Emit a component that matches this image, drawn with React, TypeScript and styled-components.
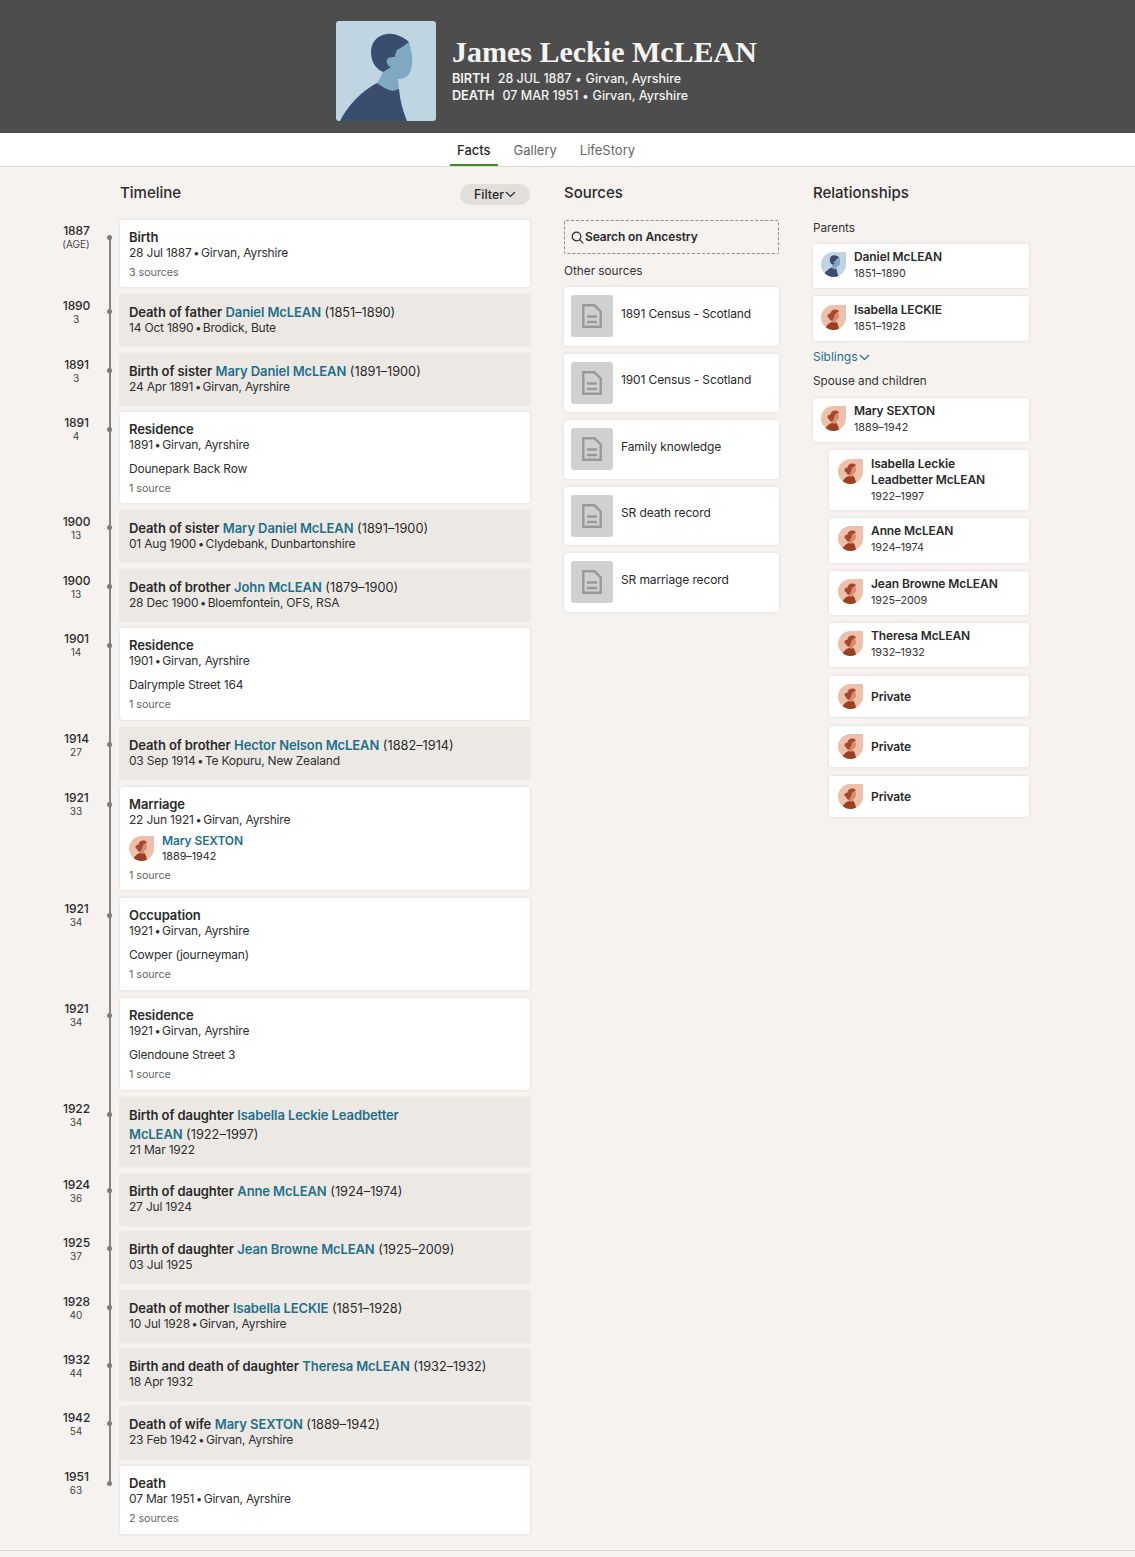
import React from "react";
import styled, { createGlobalStyle } from "styled-components";

const Global = createGlobalStyle`
  html, body { margin: 0; padding: 0; background: #f5f2ef; }
  body { font-family: Inter, "Liberation Sans", sans-serif; color: #2a2a2a; font-size: 12px; line-height: 16px; }
`;

const Page = styled.div`width: 1135px; height: 1557px; overflow: hidden; background: #f5f2ef;`;
const Header = styled.header`height: 133px; background: #4d4d4d; display: flex; padding: 21px 0 0 336px; box-sizing: border-box; gap: 16px;`;
const Portrait = styled.div`width: 100px; height: 100px; border-radius: 3px; overflow: hidden; background: #c0d5e2; svg { display: block; }`;
const HeadInfo = styled.div`color: #f2f2f2; padding-top: 13px;`;
const Name = styled.h1`margin: 0; font: bold 30px/36px "Liberation Serif", serif; color: #f4f4f4; white-space: nowrap;`;
const Bullet = styled.span`font-size: 11px; margin: 0 -1.5px;`;
const HeadLine = styled.div`
  font-size: 12.5px; line-height: 17px; font-weight: 500; white-space: nowrap;
  b { font-size: 12.75px; font-weight: 600; letter-spacing: -0.1px; margin-right: 8px; }
  ${Bullet} { font-size: 12px; margin: 0 0.5px; }
`;
const Tabs = styled.nav`height: 34px; box-sizing: border-box; background: #fff; border-bottom: 1px solid #dcd9d5; display: flex; padding-left: 450px; gap: 9px;`;
const Tab = styled.a<{ $active?: boolean }>`
  height: 33px; box-sizing: border-box; padding: 9px 7px 0; font-size: 13px; color: ${p => (p.$active ? "#2a2a2a" : "#666")};
  font-weight: ${p => (p.$active ? 500 : 400)}; border-bottom: 2px solid ${p => (p.$active ? "#3f8a1c" : "transparent")};
`;
const Main = styled.main`display: flex; height: 1384px; box-sizing: border-box; border-bottom: 1px solid #dcd9d5; padding: 16px 0 0 60px;`;
const TimelineCol = styled.section`width: 472px; margin-right: 32px;`;
const ColHead = styled.div<{ $indent?: number }>`height: 37px; display: flex; justify-content: space-between; align-items: flex-start; margin-left: ${p => p.$indent ?? 0}px;`;
const Title = styled.h2`margin: 0; font-size: 15px; line-height: 20px; font-weight: 500; color: #2a2a2a;`;
const FilterBtn = styled.button`
  width: 70px; height: 21px; margin: 1px 2px 0 0; border: 0; padding: 0; border-radius: 11px; background: #e2dfdb; color: #2a2a2a;
  font: 500 12.5px Inter, sans-serif; display: flex; justify-content: center; align-items: center; gap: 1px;
`;
const Rows = styled.div`
  position: relative;
  &::before { content: ""; position: absolute; left: 49px; top: 17px; bottom: 50px; width: 1.5px; background: #858585; }
`;
const Row = styled.div<{ $h: number; $gap: number }>`display: flex; height: ${p => p.$h}px; margin-bottom: ${p => p.$gap}px;`;
const YearBox = styled.div<{ $grey?: boolean }>`width: 32px; text-align: center; padding-top: ${p => (p.$grey ? 4 : 3)}px; flex: none;`;
const Year = styled.div`font-size: 12px; letter-spacing: -0.1px; margin-left: 1px; line-height: 15px; font-weight: 500; color: #2a2a2a;`;
const Age = styled.div`font-size: 10px; line-height: 13px; color: #444;`;
const Rail = styled.div`width: 28px; flex: none; position: relative; &::after { content: ""; position: absolute; left: 15px; top: 15px; width: 5px; height: 5px; border-radius: 50%; background: #7c7c7c; }`;
const Card = styled.div<{ $grey?: boolean }>`
  box-sizing: border-box; border-radius: 3px; flex: none; padding: 9px 9px 0;
  width: ${p => (p.$grey ? 412 : 410)}px;
  margin-left: ${p => (p.$grey ? -1 : 0)}px;
  padding-left: ${p => (p.$grey ? 10 : 9)}px;
  background: ${p => (p.$grey ? "#ece9e5" : "#fff")};
  box-shadow: ${p => (p.$grey ? "0 0 2px rgba(0,0,0,.05)" : "0 0 3px rgba(0,0,0,.12)")};
`;
const EvTitle = styled.div<{ $grey?: boolean }>`
  font-size: 12.75px; line-height: ${p => (p.$grey ? 18 : 16)}px; color: #2a2a2a;
  b { font-size: 13px; font-weight: 600; letter-spacing: -0.1px; }
  a { font-size: 13px; color: #1f6f8b; font-weight: 600; letter-spacing: -0.1px; }
`;
const EvLine = styled.div<{ $grey?: boolean }>`font-size: 12px; letter-spacing: -0.2px; line-height: 16px; color: #2f2f2f; margin-top: ${p => (p.$grey ? -2 : -1)}px;`;
const EvDesc = styled(EvLine)`margin-top: 8px;`;
const EvSrc = styled.div`font-size: 10.75px; letter-spacing: -0.05px; line-height: 15px; margin-top: 3.5px; color: #666;`;
const Spouse = styled.div`display: flex; gap: 8px; margin-top: 5px; height: 31px; align-items: center;`;
const SpouseName = styled.div`font-size: 12px; letter-spacing: -0.1px; line-height: 16px; color: #1f6f8b; font-weight: 600;`;
const SpouseYears = styled.div`font-size: 10.75px; line-height: 16px;`;
const Avatar = styled.div<{ $male?: boolean; $mt?: number }>`width: 25px; height: 25px; flex: none; margin-top: ${p => p.$mt ?? 0}px; border-radius: 50% 0 50% 50%; overflow: hidden; background: ${p => (p.$male ? "#c0d5e2" : "#ecc0ab")}; svg { display: block; }`;
const SourcesCol = styled.section`width: 215px; margin-right: 34px;`;
const SearchBox = styled.div`height: 34px; box-sizing: border-box; border: 1px dashed #8c8c8c; border-radius: 2px; display: flex; align-items: center; gap: 1px; padding-left: 6px; font-size: 12px; font-weight: 600; letter-spacing: -0.1px;`;
const Label = styled.div<{ $mt?: number; $mb?: number }>`font-size: 11.75px; line-height: 16px; color: #333; margin-top: ${p => p.$mt ?? 0}px; margin-bottom: ${p => p.$mb ?? 0}px;`;
const SourceList = styled.div`display: flex; flex-direction: column; gap: 8px; margin-top: 8px;`;
const SourceCard = styled.div`height: 58.5px; box-sizing: border-box; background: #fff; border-radius: 3px; box-shadow: 0 0 3px rgba(0,0,0,.12); display: flex; align-items: center; padding-left: 7px; gap: 8px;`;
const SourceText = styled.span`font-size: 12px; letter-spacing: -0.12px; margin-bottom: 5px;`;
const Thumb = styled.div`width: 42px; height: 42px; border-radius: 3px; background: #d0d0d0; display: flex; align-items: center; justify-content: center;`;
const RelCol = styled.section`width: 216px;`;
const RelCard = styled.div<{ $h: number; $child?: boolean; $gap?: number; $center?: boolean; $pt?: number }>`
  height: ${p => p.$h}px; box-sizing: border-box; background: #fff; border-radius: 3px; box-shadow: 0 0 3px rgba(0,0,0,.12);
  margin-left: ${p => (p.$child ? 16 : 0)}px; margin-bottom: ${p => p.$gap ?? 8}px; display: flex; align-items: ${p => (p.$center ? "center" : "flex-start")}; gap: 8px;
  padding: ${p => (p.$center ? 0 : p.$pt ?? 5)}px 0 0 ${p => (p.$child ? 9 : 8)}px;
`;
const RelName = styled.div`font-size: 12px; letter-spacing: -0.1px; line-height: 16px; font-weight: 600; color: #2a2a2a;`;
const RelYears = styled.div`font-size: 10.75px; line-height: 16px; margin-top: 0.5px; color: #333;`;
const Siblings = styled.a`display: flex; align-items: center; gap: 1px; color: #1f6f8b; font-size: 12px; line-height: 16px; margin: 8px 0 8px;`;

const Person = ({ male, size = 25 }: { male?: boolean; size?: number }) =>
  male ? (
    <svg width={size} height={size} viewBox="0 0 100 100">
      <path d="M73 21 C75 28 77 36 76 44 C75 52 72 58 62 58 L63 70 L54 72 L41 62 C44 58 46 54 47 50 L50 30 Z" fill="#7fa9c2" />
      <path d="M73 21 C66 15 58 12 51 13 C41 14 35 22 35 31 C35 41 40 48 47 51 L55 46 C52 45 50 42 51 39 C52 36 56 36 59 36 C59 33 60 31 61 29 C65 27 69 24 73 21 Z" fill="#3a4d6e" />
      <path d="M4 100 C12 84 26 70 41 62 C46 66 52 69 57 70 L63 68 C64 80 67 90 71 100 Z" fill="#3a4d6e" />
    </svg>
  ) : (
    <svg width={size} height={size} viewBox="0 0 100 100">
      <path d="M50 26 C60 20 72 28 72 42 C72 52 66 58 60 60 L61 72 L44 72 L44 50 Z" fill="#d98c74" />
      <path d="M38 34 C38 24 48 16 60 18 C66 19 70 22 72 27 C62 28 56 34 54 42 C52 50 48 58 44 64 C38 62 34 58 32 52 C25 50 23 38 32 36 C34 35 36 35 38 34 Z" fill="#a8482a" />
      <path d="M15 100 C18 84 30 72 44 68 C50 72 56 72 62 68 C68 76 72 88 72 100 Z" fill="#98401f" />
    </svg>
  );

const Chevron = ({ color = "#2a2a2a" }: { color?: string }) => (
  <svg width="11" height="7" viewBox="0 0 11 7" fill="none" stroke={color} strokeWidth="1.2"><path d="M1 1l4.5 4.5L10 1" /></svg>
);

const DocIcon = () => (
  <svg width="20" height="24" viewBox="0 0 20 24" fill="none" stroke="#999" strokeWidth="2.4">
    <path d="M1.3 1.3h11.2l6.2 6.2v15.2H1.3z" />
    <path d="M5 12.5h10M5 18h10" strokeWidth="2.4" />
  </svg>
);

const SearchIcon = () => (
  <svg width="13" height="13" viewBox="0 0 13 13" fill="none" stroke="#2a2a2a" strokeWidth="1.2"><circle cx="5.5" cy="5.5" r="4.3" /><path d="M8.6 8.6L12.3 12.3" /></svg>
);

type Ev = {
  y: string; a: string; h: number; g: number; grey?: boolean;
  t: React.ReactNode; d: string; desc?: string; src?: string; spouse?: boolean;
};

const L = ({ children }: { children: React.ReactNode }) => <a>{children}</a>;

const Dated = ({ text }: { text: string }) => {
  const [a, b] = text.split(" • ");
  return b ? <>{a} <Bullet>•</Bullet> {b}</> : <>{a}</>;
};

const events: Ev[] = [
  { y: "1887", a: "(AGE)", h: 67, g: 7, t: <b>Birth</b>, d: "28 Jul 1887 • Girvan, Ayrshire", src: "3 sources" },
  { y: "1890", a: "3", h: 53, g: 6, grey: true, t: <><b>Death of father</b> <L>Daniel McLEAN</L> (1851–1890)</>, d: "14 Oct 1890 • Brodick, Bute" },
  { y: "1891", a: "3", h: 53, g: 6, grey: true, t: <><b>Birth of sister</b> <L>Mary Daniel McLEAN</L> (1891–1900)</>, d: "24 Apr 1891 • Girvan, Ayrshire" },
  { y: "1891", a: "4", h: 91, g: 7, t: <b>Residence</b>, d: "1891 • Girvan, Ayrshire", desc: "Dounepark Back Row", src: "1 source" },
  { y: "1900", a: "13", h: 53, g: 6, grey: true, t: <><b>Death of sister</b> <L>Mary Daniel McLEAN</L> (1891–1900)</>, d: "01 Aug 1900 • Clydebank, Dunbartonshire" },
  { y: "1900", a: "13", h: 53, g: 6, grey: true, t: <><b>Death of brother</b> <L>John McLEAN</L> (1879–1900)</>, d: "28 Dec 1900 • Bloemfontein, OFS, RSA" },
  { y: "1901", a: "14", h: 92, g: 7, t: <b>Residence</b>, d: "1901 • Girvan, Ayrshire", desc: "Dalrymple Street 164", src: "1 source" },
  { y: "1914", a: "27", h: 53, g: 7, grey: true, t: <><b>Death of brother</b> <L>Hector Nelson McLEAN</L> (1882–1914)</>, d: "03 Sep 1914 • Te Kopuru, New Zealand" },
  { y: "1921", a: "33", h: 103, g: 8, t: <b>Marriage</b>, d: "22 Jun 1921 • Girvan, Ayrshire", spouse: true, src: "1 source" },
  { y: "1921", a: "34", h: 92, g: 8, t: <b>Occupation</b>, d: "1921 • Girvan, Ayrshire", desc: "Cowper (journeyman)", src: "1 source" },
  { y: "1921", a: "34", h: 92, g: 7, t: <b>Residence</b>, d: "1921 • Girvan, Ayrshire", desc: "Glendoune Street 3", src: "1 source" },
  { y: "1922", a: "34", h: 70, g: 6, grey: true, t: <><b>Birth of daughter</b> <L>Isabella Leckie Leadbetter<br />McLEAN</L> (1922–1997)</>, d: "21 Mar 1922" },
  { y: "1924", a: "36", h: 53, g: 5, grey: true, t: <><b>Birth of daughter</b> <L>Anne McLEAN</L> (1924–1974)</>, d: "27 Jul 1924" },
  { y: "1925", a: "37", h: 53, g: 6, grey: true, t: <><b>Birth of daughter</b> <L>Jean Browne McLEAN</L> (1925–2009)</>, d: "03 Jul 1925" },
  { y: "1928", a: "40", h: 53, g: 5, grey: true, t: <><b>Death of mother</b> <L>Isabella LECKIE</L> (1851–1928)</>, d: "10 Jul 1928 • Girvan, Ayrshire" },
  { y: "1932", a: "44", h: 53, g: 5, grey: true, t: <><b>Birth and death of daughter</b> <L>Theresa McLEAN</L> (1932–1932)</>, d: "18 Apr 1932" },
  { y: "1942", a: "54", h: 54, g: 6, grey: true, t: <><b>Death of wife</b> <L>Mary SEXTON</L> (1889–1942)</>, d: "23 Feb 1942 • Girvan, Ayrshire" },
  { y: "1951", a: "63", h: 68, g: 0, t: <b>Death</b>, d: "07 Mar 1951 • Girvan, Ayrshire", src: "2 sources" },
];

const sources = ["1891 Census - Scotland", "1901 Census - Scotland", "Family knowledge", "SR death record", "SR marriage record"];

const kids: { n: React.ReactNode; y?: string; h: number; g: number; pt?: number }[] = [
  { n: <>Isabella Leckie<br />Leadbetter McLEAN</>, y: "1922–1997", h: 60, g: 8, pt: 6 },
  { n: "Anne McLEAN", y: "1924–1974", h: 45, g: 8 },
  { n: "Jean Browne McLEAN", y: "1925–2009", h: 44, g: 8 },
  { n: "Theresa McLEAN", y: "1932–1932", h: 44, g: 9 },
  { n: "Private", h: 41, g: 9 },
  { n: "Private", h: 41, g: 9 },
  { n: "Private", h: 41, g: 8 },
];

export default function App() {
  return (
    <Page>
      <Global />
      <Header>
        <Portrait><Person male size={100} /></Portrait>
        <HeadInfo>
          <Name>James Leckie McLEAN</Name>
          <HeadLine><b>BIRTH</b><Dated text="28 JUL 1887 • Girvan, Ayrshire" /></HeadLine>
          <HeadLine><b>DEATH</b><Dated text="07 MAR 1951 • Girvan, Ayrshire" /></HeadLine>
        </HeadInfo>
      </Header>
      <Tabs>
        <Tab $active>Facts</Tab>
        <Tab>Gallery</Tab>
        <Tab>LifeStory</Tab>
      </Tabs>
      <Main>
        <TimelineCol>
          <ColHead $indent={60}>
            <Title>Timeline</Title>
            <FilterBtn>Filter<Chevron /></FilterBtn>
          </ColHead>
          <Rows>
            {events.map((e, i) => (
              <Row key={i} $h={e.h} $gap={e.g}>
                <YearBox $grey={e.grey}>
                  <Year>{e.y}</Year>
                  <Age>{e.a}</Age>
                </YearBox>
                <Rail />
                <Card $grey={e.grey}>
                  <EvTitle $grey={e.grey}>{e.t}</EvTitle>
                  <EvLine $grey={e.grey}><Dated text={e.d} /></EvLine>
                  {e.spouse && (
                    <Spouse>
                      <Avatar><Person /></Avatar>
                      <div>
                        <SpouseName>Mary SEXTON</SpouseName>
                        <SpouseYears>1889–1942</SpouseYears>
                      </div>
                    </Spouse>
                  )}
                  {e.desc && <EvDesc>{e.desc}</EvDesc>}
                  {e.src && <EvSrc>{e.src}</EvSrc>}
                </Card>
              </Row>
            ))}
          </Rows>
        </TimelineCol>
        <SourcesCol>
          <ColHead><Title>Sources</Title></ColHead>
          <SearchBox><SearchIcon />Search on Ancestry</SearchBox>
          <Label $mt={9}>Other sources</Label>
          <SourceList>
            {sources.map(s => (
              <SourceCard key={s}><Thumb><DocIcon /></Thumb><SourceText>{s}</SourceText></SourceCard>
            ))}
          </SourceList>
        </SourcesCol>
        <RelCol>
          <ColHead><Title>Relationships</Title></ColHead>
          <Label $mb={8}>Parents</Label>
          <RelCard $h={44}><Avatar $male $mt={3}><Person male /></Avatar><div><RelName>Daniel McLEAN</RelName><RelYears>1851–1890</RelYears></div></RelCard>
          <RelCard $h={45} $gap={0} $pt={6}><Avatar $mt={3}><Person /></Avatar><div><RelName>Isabella LECKIE</RelName><RelYears>1851–1928</RelYears></div></RelCard>
          <Siblings>Siblings<Chevron color="#1f6f8b" /></Siblings>
          <Label $mb={9}>Spouse and children</Label>
          <RelCard $h={44}><Avatar $mt={3}><Person /></Avatar><div><RelName>Mary SEXTON</RelName><RelYears>1889–1942</RelYears></div></RelCard>
          {kids.map((k, i) => (
            <RelCard key={i} $h={k.h} $gap={k.g} $child $center={!k.y} $pt={k.pt}>
              <Avatar $mt={k.y ? 3 : 0}><Person /></Avatar>
              <div>
                <RelName>{k.n}</RelName>
                {k.y && <RelYears>{k.y}</RelYears>}
              </div>
            </RelCard>
          ))}
        </RelCol>
      </Main>
    </Page>
  );
}
